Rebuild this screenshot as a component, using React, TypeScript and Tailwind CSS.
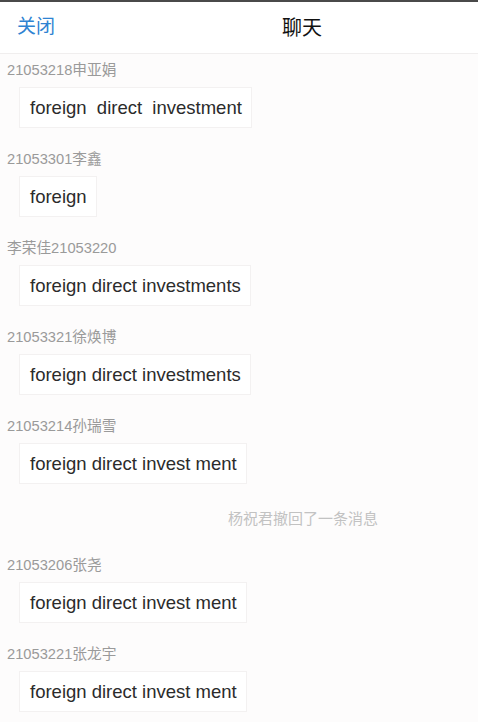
import React from "react";

const font = { fontFamily: '"Liberation Sans", "Noto Sans CJK SC", sans-serif' };

type Msg = { name: string; text: string };

const before: Msg[] = [
  { name: "21053218申亚娟", text: "foreign  direct  investment" },
  { name: "21053301李鑫", text: "foreign" },
  { name: "李荣佳21053220", text: "foreign direct investments" },
  { name: "21053321徐焕博", text: "foreign direct investments" },
  { name: "21053214孙瑞雪", text: "foreign direct invest ment" },
];

const after: Msg[] = [
  { name: "21053206张尧", text: "foreign direct invest ment" },
  { name: "21053221张龙宇", text: "foreign direct invest ment" },
];

function Item({ m }: { m: Msg }) {
  return (
    <div className="flex flex-col items-start mb-[21px]">
      <div className="h-[20px] leading-[20px] pl-[7px] text-[14.7px] text-[#9a9a9a]">{m.name}</div>
      <div className="mt-[7px] ml-[19px] h-[41px] pl-[10px] pr-[9px] flex items-center bg-white border border-[#f3f1f1] text-[18.5px] text-[#2b2b2b] whitespace-pre">
        {m.text}
      </div>
    </div>
  );
}

export default function App() {
  return (
    <div className="w-[478px] h-[722px] overflow-hidden bg-[#fdfcfc]" style={font}>
      <div className="h-[2px] bg-[#4a4a4a]" />
      <div className="h-[52px] bg-white border-b border-[#f0eeee] flex items-center">
        <div className="pl-[17px] text-[19px] text-[#2f83d2]">关闭</div>
        <div className="ml-[227px] text-[20px] text-[#111111]">聊天</div>
      </div>
      <div className="pt-[6px]">
        {before.map((m, i) => (
          <Item key={i} m={m} />
        ))}
        <div className="h-[29px] leading-[28px] mb-[21px] pl-[228px] text-[15px] text-[#c2c2c2]">
          杨祝君撤回了一条消息
        </div>
        {after.map((m, i) => (
          <Item key={i} m={m} />
        ))}
      </div>
    </div>
  );
}
